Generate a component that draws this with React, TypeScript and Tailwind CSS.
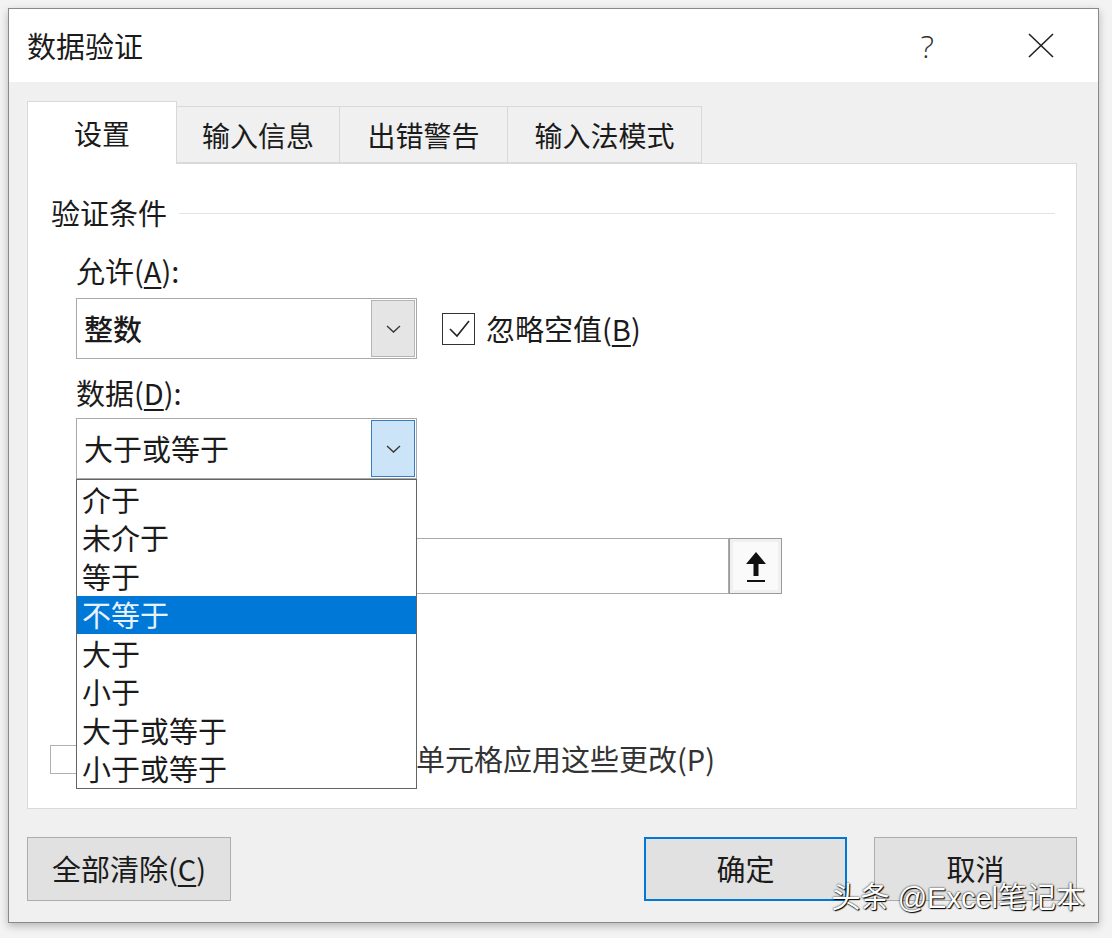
import React from "react"

const font = { fontFamily: '"Noto Sans CJK SC", "Noto Sans", sans-serif' }

const options = ["介于", "未介于", "等于", "不等于", "大于", "小于", "大于或等于", "小于或等于"]

function Chevron() {
  return (
    <svg width="15" height="8" viewBox="0 0 15 8">
      <polyline points="1,1 7.5,7 14,1" fill="none" stroke="#333" strokeWidth="1.3" />
    </svg>
  )
}

function Combo({ value, active, bold }: { value: string; active?: boolean; bold?: boolean }) {
  return (
    <div className="flex w-[341px] h-[61px] border border-[#a9a9a9] bg-white">
      <div className={`flex-1 flex items-center pl-[7px] text-[29px] ${bold ? "font-medium" : ""}`}>{value}</div>
      <div
        className={`w-[44px] my-px mr-px flex items-center justify-center border ${
          active ? "border-[#3a7cc0] bg-[#cce4f7]" : "border-[#b4b4b4] bg-[#e5e5e5]"
        }`}
      >
        <Chevron />
      </div>
    </div>
  )
}

function Btn({ label, primary }: { label: React.ReactNode; primary?: boolean }) {
  return (
    <div
      className={`w-[203px] h-[64px] flex items-center justify-center bg-[#e1e1e1] text-[29px] ${
        primary ? "border-2 border-[#0078d7]" : "border border-[#adadad]"
      }`}
    >
      {label}
    </div>
  )
}

export default function App() {
  return (
    <div className="relative w-[1112px] h-[938px] bg-[#f3f3f3] pt-2 pl-2 text-[#1b1b1b]" style={font}>
      <div className="w-[1091px] h-[915px] border border-[#8a8a8a] bg-[#f0f0f0] flex flex-col shadow-[0_3px_8px_rgba(0,0,0,0.25)]">
        {/* Title bar */}
        <div className="h-[73px] bg-white flex items-center pl-[18px] pr-[44px]">
          <div className="text-[29px] leading-none">数据验证</div>
          <div className="flex-1" />
          <div className="text-[32px] font-light text-[#333] leading-none" style={{ fontFamily: '"Open Sans", sans-serif' }}>
            ?
          </div>
          <svg className="ml-[94px]" width="26" height="25" viewBox="0 0 26 25">
            <line x1="1" y1="1" x2="25" y2="24" stroke="#222" strokeWidth="1.6" />
            <line x1="25" y1="1" x2="1" y2="24" stroke="#222" strokeWidth="1.6" />
          </svg>
        </div>

        {/* Body */}
        <div className="flex-1 flex flex-col pt-[19px] pl-[18px] pr-[21px] pb-[21px]">
          {/* Tabs */}
          <div className="flex items-end h-[62px]">
            <div className="relative z-10 -mb-px w-[150px] h-[63px] bg-white border border-b-0 border-[#d9d9d9] flex items-center justify-center text-[28px]">
              设置
            </div>
            <div className="w-[163px] h-[57px] border border-l-0 border-[#d9d9d9] flex items-center justify-center text-[28px]">
              输入信息
            </div>
            <div className="w-[168px] h-[57px] border border-l-0 border-[#d9d9d9] flex items-center justify-center text-[28px]">
              出错警告
            </div>
            <div className="w-[194px] h-[57px] border border-l-0 border-[#d9d9d9] flex items-center justify-center text-[28px]">
              输入法模式
            </div>
          </div>

          {/* Panel */}
          <div className="relative w-[1050px] h-[646px] bg-white border border-[#d9d9d9] pt-[31px] flex flex-col">
            <div className="flex items-center h-[36px] pl-[23px] pr-[21px]">
              <div className="text-[29px]">验证条件</div>
              <div className="flex-1 ml-[12px] h-px bg-[#dfe5ec]" />
            </div>

            <div className="pl-[48px] flex flex-col">
              <div className="mt-[22px] h-[36px] flex items-center text-[29px]">
                允许(<span className="underline underline-offset-4">A</span>):
              </div>
              <div className="mt-[9px] flex items-center">
                <Combo value="整数" bold />
                <div className="ml-[25px] w-[33px] h-[32px] border border-[#333] flex items-center justify-center">
                  <svg width="24" height="20" viewBox="0 0 24 20">
                    <polyline points="3,10 10,17 22,2" fill="none" stroke="#222" strokeWidth="1.6" />
                  </svg>
                </div>
                <div className="ml-[11px] text-[29px]">
                  忽略空值(<span className="underline underline-offset-4">B</span>)
                </div>
              </div>

              <div className="mt-[16px] h-[36px] flex items-center text-[29px]">
                数据(<span className="underline underline-offset-4">D</span>):
              </div>
              <div className="relative mt-[7px] w-[341px]">
                <Combo value="大于或等于" active />
                {/* open dropdown list */}
                <div className="absolute left-0 top-full z-20 w-[341px] h-[310px] border border-[#646464] bg-white">
                  {options.map((o) => (
                    <div
                      key={o}
                      className={`h-[38.5px] flex items-center pl-[5px] text-[29px] ${
                        o === "不等于" ? "bg-[#0078d7] text-[#e8f2ff]" : ""
                      }`}
                    >
                      {o}
                    </div>
                  ))}
                </div>
              </div>

              {/* row under the open list */}
              <div className="mt-[59px] flex">
                <div className="w-[653px] h-[56px] border border-[#a9a9a9] bg-white" />
                <div className="w-[53px] h-[56px] border border-[#9a9a9a] bg-[#f0f0f0] p-[3px]">
                  <div className="w-full h-full bg-[#fafafa] flex items-center justify-center">
                    <svg width="24" height="36" viewBox="0 0 24 36">
                      <path d="M12 4 L22 16 L14.5 16 L14.5 28 L9.5 28 L9.5 16 L2 16 Z" fill="#111" />
                      <line x1="3" y1="33" x2="21" y2="33" stroke="#111" strokeWidth="2" />
                    </svg>
                  </div>
                </div>
              </div>
            </div>

            <div className="mt-[147px] pl-[22px] flex items-center h-[36px]">
              <div className="w-[27px] h-[29px] border border-[#b0b0b0] bg-white" />
              <div className="ml-[20px] text-[29px] text-[#333]">对有同样设置的所有其他单元格应用这些更改(P)</div>
            </div>
          </div>

          {/* Buttons */}
          <div className="mt-[28px] flex">
            <div className="w-[204px] h-[64px] flex items-center justify-center bg-[#e1e1e1] border border-[#adadad] text-[29px]">
              全部清除(<span className="underline underline-offset-4">C</span>)
            </div>
            <div className="flex-1" />
            <Btn label="确定" primary />
            <div className="w-[27px]" />
            <Btn label="取消" />
          </div>
        </div>
      </div>

      {/* watermark */}
      <div
        className="absolute right-[27px] top-[877px] z-30 text-[29px] text-white [text-shadow:0_0_2px_#000,1px_1px_1px_#000]"
        style={{ fontFamily: '"Liberation Sans", "Noto Sans CJK SC", sans-serif' }}
      >
        头条 @Excel笔记本
      </div>
    </div>
  )
}
